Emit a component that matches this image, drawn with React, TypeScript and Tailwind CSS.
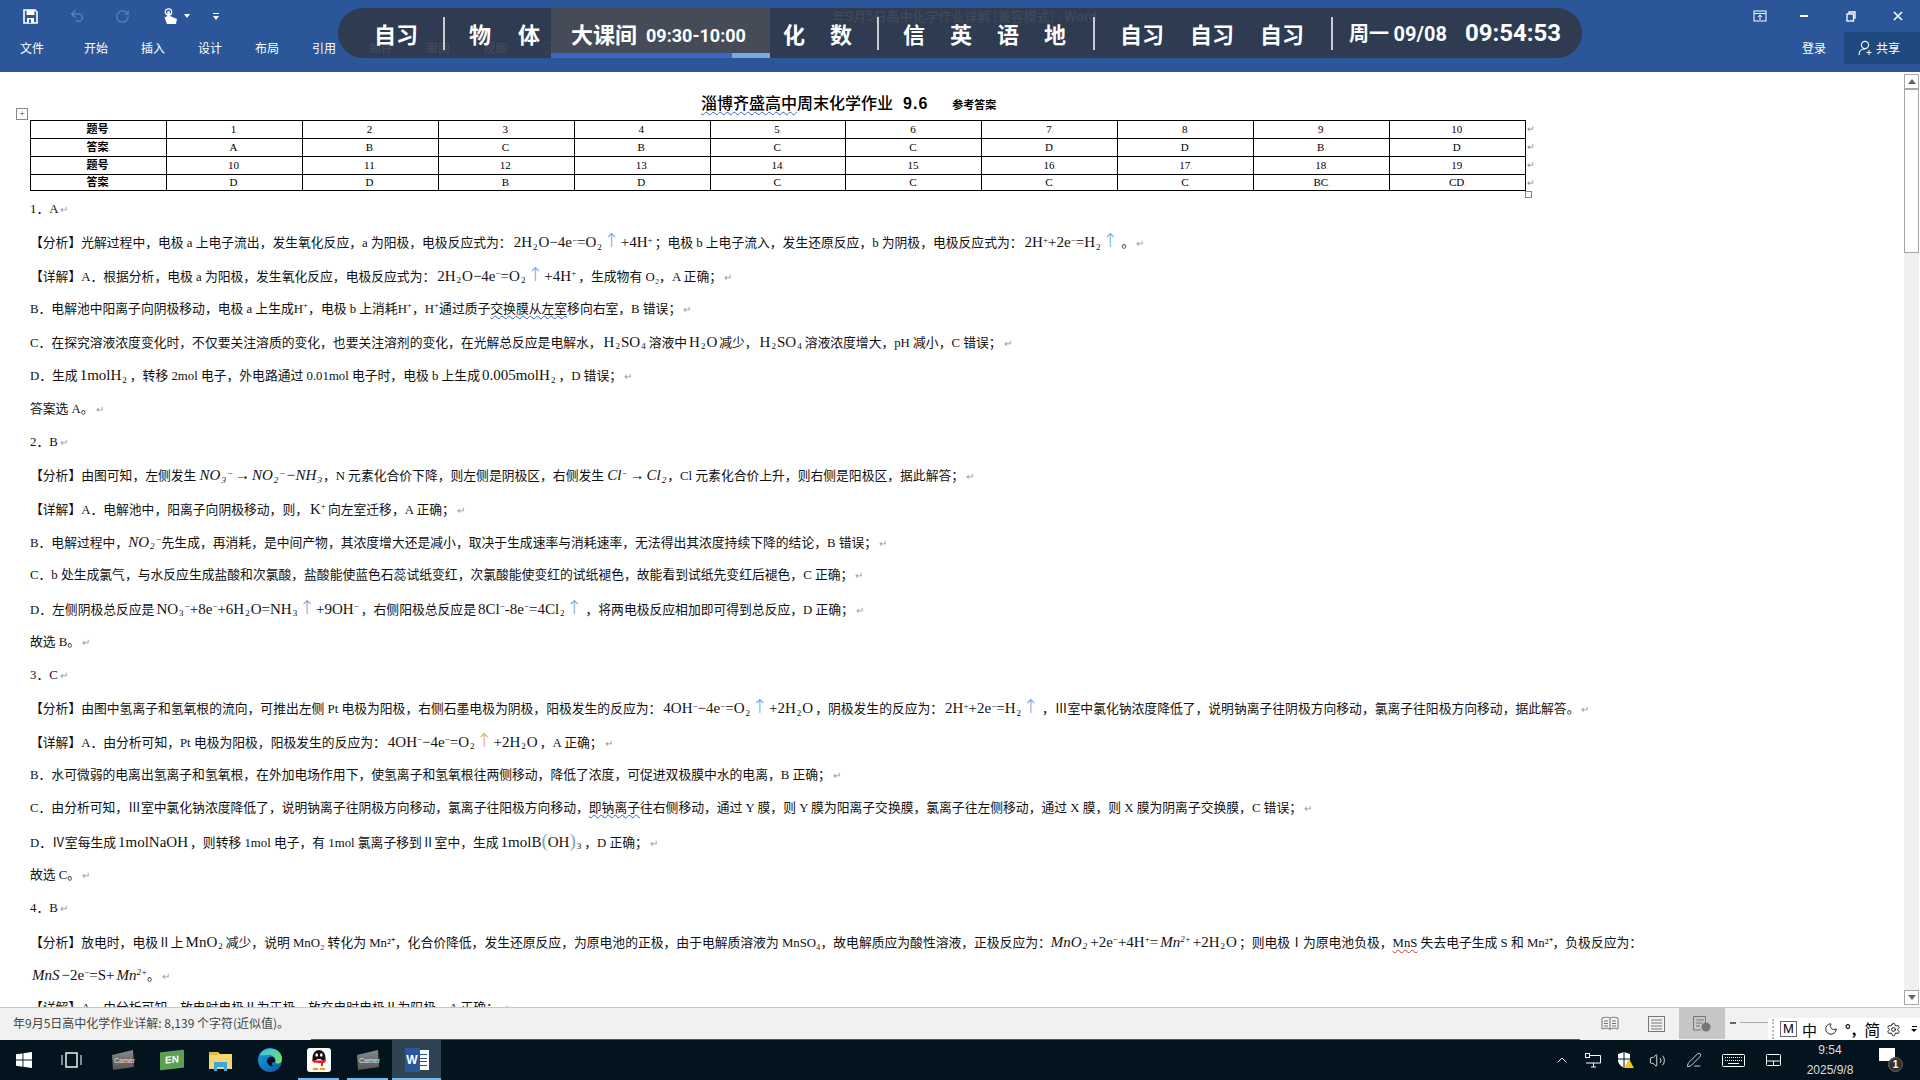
import type { ReactNode } from 'react'
import {
  Undo2, RotateCcw, Lightbulb, ChevronUp, Volume2, PenLine, Settings, Moon,
} from 'lucide-react'

const S = ({ children }: { children: ReactNode }) => <sub className="text-[9px] mx-[1px]">{children}</sub>
const U = ({ children }: { children: ReactNode }) => <sup className="text-[9px]">{children}</sup>
const Up = ({ c = 'text-[#7ba3d8]' }: { c?: string }) => (
  <span className={`${c} text-[19px] leading-none mx-[1px] font-['DejaVu_Sans',sans-serif] font-extralight`}>↑</span>
)
const Ret = () => <span className="text-[10px] text-[#999] ml-[2px]">↵</span>
const E = ({ children }: { children: ReactNode }) => <span className="text-[15px] mx-[2px]">{children}</span>
const I = ({ children }: { children: ReactNode }) => <i className="text-[15px]">{children}</i>
const Paren = ({ children }: { children: ReactNode }) => (
  <span className="text-[#7ba3d8] text-[19px] leading-none font-extralight">{children}</span>
)
const Blue = ({ children }: { children: ReactNode }) => (
  <span className="underline decoration-wavy decoration-[#3a5fd0] decoration-1 underline-offset-2">{children}</span>
)
const Red = ({ children }: { children: ReactNode }) => (
  <span className="underline decoration-wavy decoration-[#d03030] decoration-1 underline-offset-2">{children}</span>
)
const P = ({ children }: { children: ReactNode }) => (
  <p className="h-[33.3px] leading-[33.3px] pl-[30px] whitespace-nowrap">{children}</p>
)

const eqAnode = (c?: string) => (
  <E>4OH<U>−</U>−4e<U>−</U>=O<S>2</S><Up c={c} />+2H<S>2</S>O</E>
)
const eqWater = (c?: string) => (
  <E>2H<S>2</S>O−4e<U>−</U>=O<S>2</S><Up c={c} />+4H<U>+</U></E>
)
const eqH2 = (c?: string) => (
  <E>2H<U>+</U>+2e<U>−</U>=H<S>2</S><Up c={c} /></E>
)

const row1 = ['1', '2', '3', '4', '5', '6', '7', '8', '9', '10']
const row2 = ['A', 'B', 'C', 'B', 'C', 'C', 'D', 'D', 'B', 'D']
const row3 = ['10', '11', '12', '13', '14', '15', '16', '17', '18', '19']
const row4 = ['D', 'D', 'B', 'D', 'C', 'C', 'C', 'C', 'BC', 'CD']

function TableRow({ head, cells, last }: { head: string; cells: string[]; last?: boolean }) {
  return (
    <tr className={last ? 'h-[16px]' : 'h-[18px]'}>
      <td className="border border-black text-center text-[11px] font-bold leading-none p-0">
        {head}<span className="text-[7px] text-[#999] font-normal">.</span>
      </td>
      {cells.map((c, i) => (
        <td key={i} className="border border-black text-center text-[11px] leading-none p-0">
          {c}<span className="text-[7px] text-[#999]">.</span>
        </td>
      ))}
    </tr>
  )
}

function Ribbon() {
  return (
    <header className="relative h-[72px] bg-[#2b579a] text-white shrink-0">
      {/* quick access + title + window buttons */}
      <div className="h-[32px] flex items-center relative">
        <svg width="15" height="15" viewBox="0 0 15 15" className="ml-[23px]">
          <path d="M1 1h11l2 2v11H1z" fill="none" stroke="#fff" strokeWidth="1.6" />
          <rect x="3.5" y="1" width="8" height="5" fill="#fff" />
          <rect x="4" y="9" width="7" height="5" fill="#fff" />
          <rect x="6" y="10.5" width="2" height="3.5" fill="#2b579a" />
        </svg>
        <Undo2 className="w-[16px] h-[16px] ml-[31px] text-[#5b7fb5]" strokeWidth={2.2} />
        <RotateCcw className="w-[15px] h-[15px] ml-[30px] text-[#5b7fb5] -scale-x-100" strokeWidth={2.2} />
        <svg width="14" height="17" viewBox="0 0 14 17" className="ml-[33px]">
          <circle cx="5.5" cy="4" r="3.2" fill="none" stroke="#fff" strokeWidth="1.3" />
          <rect x="4.3" y="3" width="2.6" height="9" rx="1.3" fill="#fff" />
          <path d="M4.5 8l-3 1.5L4 16h9l1-5-7-3z" fill="#fff" />
        </svg>
        <span className="ml-[7px] w-0 h-0 border-x-[3px] border-x-transparent border-t-[4px] border-t-white" />
        <span className="ml-[23px] flex flex-col items-center gap-[2px]">
          <span className="w-[6px] h-[1px] bg-white" />
          <span className="w-0 h-0 border-x-[3px] border-x-transparent border-t-[4px] border-t-white" />
        </span>
        <span className="ml-[614px] text-[13px] text-white/90 font-['Noto_Sans_CJK_SC',sans-serif]">
          年9月5日高中化学作业详解 [兼容模式] - Word
        </span>
        <svg width="14" height="12" viewBox="0 0 14 12" className="ml-auto mr-[33px]" fill="none" stroke="#fff">
          <rect x="1" y="1" width="12" height="10" />
          <path d="M1 3.5h12M7 10V5M5 7l2-2 2 2" />
        </svg>
        <span className="w-[8px] h-[2px] bg-white mr-[38px]" />
        <svg width="10" height="11" viewBox="0 0 10 11" className="mr-[37px]" fill="none" stroke="#fff" strokeWidth="1.3">
          <rect x="1" y="3" width="6.5" height="7" />
          <path d="M3 3V1h6v6H7.5" />
        </svg>
        <svg width="10" height="10" viewBox="0 0 10 10" className="mr-[17px]" stroke="#fff" strokeWidth="1.6">
          <path d="M1 1l8 8M9 1l-8 8" />
        </svg>
      </div>
      {/* tabs */}
      <div className="h-[32px] flex items-center text-[12px] font-['Noto_Sans_CJK_SC',sans-serif]">
        <span className="ml-[20px]">文件</span>
        <span className="ml-[40px]">开始</span>
        <span className="ml-[33px]">插入</span>
        <span className="ml-[33px]">设计</span>
        <span className="ml-[33px]">布局</span>
        <span className="ml-[33px]">引用</span>
        <span className="ml-[33px]">邮件</span>
        <span className="ml-[33px]">审阅</span>
        <span className="ml-[33px]">视图</span>
        <Lightbulb className="w-[14px] h-[14px] ml-[33px]" strokeWidth={1.2} />
        <span className="ml-[2px]">告诉我您想要做什么...</span>
        <span className="ml-auto mr-[18px]">登录</span>
        <span className="h-[32px] w-[76px] bg-[#1f4a80] flex items-center pl-[14px] gap-[2px]">
          <svg width="16" height="16" viewBox="0 0 16 16" fill="none" stroke="#fff" strokeWidth="1.1">
            <circle cx="7" cy="5" r="3.6" />
            <path d="M1 15c0-4 2.5-6 6-6M11 10v5M8.5 12.5h5" />
          </svg>
          共享
        </span>
      </div>
      {/* class schedule overlay */}
      <div className="absolute left-[338px] top-[8px] w-[1244px] h-[50px] rounded-[25px] bg-[#2f3848]/90 overflow-hidden flex items-center font-['Noto_Sans_CJK_SC',sans-serif] font-bold text-[22px] text-white leading-none">
        <span className="w-[105px] pl-[36px]">自习</span>
        <span className="w-[2px] h-[33px] bg-[#c8ccd2]" />
        <span className="w-[106px] pl-[24px] flex gap-[27px]"><span>物</span><span>体</span></span>
        <div className="relative w-[219px] h-[50px] bg-[#454c58] flex items-center pl-[20px]">
          <span>大课间</span>
          <span className="text-[18px] ml-[9px] mt-[5px] font-['Roboto',sans-serif]">09:30-10:00</span>
          <div className="absolute left-0 bottom-0 w-full h-[5px] bg-[#3f66c0]">
            <div className="absolute right-0 top-0 w-[38px] h-full bg-[#74ace0]" />
          </div>
        </div>
        <span className="w-[107px] pl-[13px] flex gap-[25px]"><span>化</span><span>数</span></span>
        <span className="w-[2px] h-[33px] bg-[#c8ccd2]" />
        <span className="w-[214px] pl-[24px] flex gap-[25px]"><span>信</span><span>英</span><span>语</span><span>地</span></span>
        <span className="w-[2px] h-[33px] bg-[#c8ccd2]" />
        <span className="w-[236px] pl-[25px] flex gap-[26px]"><span>自习</span><span>自习</span><span>自习</span></span>
        <span className="w-[2px] h-[33px] bg-[#c8ccd2]" />
        <span className="pl-[16px] text-[20px] whitespace-nowrap">周一 <span className="font-['Roboto',sans-serif]">09/08</span></span>
        <span className="ml-[18px] text-[24px] font-['Roboto',sans-serif]">09:54:53</span>
      </div>
    </header>
  )
}

function Doc() {
  return (
    <div className="relative flex-1 min-w-0 bg-white overflow-hidden text-[12.8px] text-[#111] font-['Liberation_Serif','Noto_Sans_CJK_SC',serif]">
      {/* title */}
      <div className="h-[48px] pl-[701px] pt-[24px] flex items-baseline leading-none whitespace-nowrap text-black">
        <span className="text-[16px] font-medium"><Blue>淄博齐盛高中</Blue>周末化学作业</span>
        <span className="text-[16px] font-bold ml-[10px] tracking-[1px] font-['Liberation_Sans',sans-serif]">9.6</span>
        <span className="text-[11px] font-bold ml-[24px]">参考答案</span>
      </div>
      {/* table move handle */}
      <div className="absolute left-[16px] top-[36px] w-[12px] h-[12px] border border-[#888] text-[10px] leading-[9px] text-center text-[#444] bg-white">+</div>
      <table className="table-fixed border-collapse ml-[30px] w-[1496px] text-black">
        <tbody>
          <TableRow head="题号" cells={row1} />
          <TableRow head="答案" cells={row2} />
          <TableRow head="题号" cells={row3} />
          <TableRow head="答案" cells={row4} last />
        </tbody>
      </table>
      {/* row end marks + table resize handle */}
      <div className="absolute left-[1527px] top-[48px] flex flex-col text-[9px] leading-[18px] text-[#888]">
        <span>↵</span><span>↵</span><span>↵</span><span>↵</span>
      </div>
      <div className="absolute left-[1525px] top-[119px] w-[7px] h-[7px] border border-[#888] bg-white" />

      <div className="mt-[2px]">
        <P>1．A<Ret /></P>
        <P>【分析】光解过程中，电极 a 上电子流出，发生氧化反应，a 为阳极，电极反应式为：{eqWater()}；电极 b 上电子流入，发生还原反应，b 为阴极，电极反应式为：<E>2H<U>+</U>+2e<U>−</U>=H<S>2</S><Up /></E>。<Ret /></P>
        <P>【详解】A．根据分析，电极 a 为阳极，发生氧化反应，电极反应式为：{eqWater()}，生成物有 O₂，A 正确；<Ret /></P>
        <P>B．电解池中阳离子向阴极移动，电极 a 上生成H<U>+</U>，电极 b 上消耗H<U>+</U>，H<U>+</U>通过质子<Blue>交换膜从左室</Blue>移向右室，B 错误；<Ret /></P>
        <P>C．在探究溶液浓度变化时，不仅要关注溶质的变化，也要关注溶剂的变化，在光解总反应是电解水，<E>H<S>2</S>SO<S>4</S></E>溶液中<E>H<S>2</S>O</E>减少，<E>H<S>2</S>SO<S>4</S></E>溶液浓度增大，pH 减小，C 错误；<Ret /></P>
        <P>D．生成<E>1molH<S>2</S></E>，转移 2mol 电子，外电路通过 0.01mol 电子时，电极 b 上生成<E>0.005molH<S>2</S></E>，D 错误；<Ret /></P>
        <P>答案选 A。<Ret /></P>
        <P>2．B<Ret /></P>
        <P>【分析】由图可知，左侧发生 <I>NO<S>3</S><U>−</U></I><E>→</E><I>NO<S>2</S><U>−</U>−NH<S>3</S></I>，N 元素化合价下降，则左侧是阴极区，右侧发生 <I>Cl<U>−</U></I><E>→</E><I>Cl<S>2</S></I>，Cl 元素化合价上升，则右侧是阳极区，据此解答；<Ret /></P>
        <P>【详解】A．电解池中，阳离子向阴极移动，则，<E>K<U>+</U></E>向左室迁移，A 正确；<Ret /></P>
        <P>B．电解过程中，<I>NO<S>2</S><U>−</U></I>先生成，再消耗，是中间产物，其浓度增大还是减小，取决于生成速率与消耗速率，无法得出其浓度持续下降的结论，B 错误；<Ret /></P>
        <P>C．b 处生成氯气，与水反应生成盐酸和次氯酸，盐酸能使蓝色石蕊试纸变红，次氯酸能使变红的试纸褪色，故能看到试纸先变红后褪色，C 正确；<Ret /></P>
        <P>D．左侧阴极总反应是<E>NO<S>3</S><U>−</U>+8e<U>−</U>+6H<S>2</S>O=NH<S>3</S><Up />+9OH<U>−</U></E>，右侧阳极总反应是<E>8Cl<U>−</U>-8e<U>−</U>=4Cl<S>2</S><Up /></E>，将两电极反应相加即可得到总反应，D 正确；<Ret /></P>
        <P>故选 B。<Ret /></P>
        <P>3．C<Ret /></P>
        <P>【分析】由图中氢离子和氢氧根的流向，可推出左侧 Pt 电极为阳极，右侧石墨电极为阴极，阳极发生的反应为：{eqAnode()}，阴极发生的反应为：{eqH2()}，Ⅲ室中氯化钠浓度降低了，说明钠离子往阴极方向移动，氯离子往阳极方向移动，据此解答。<Ret /></P>
        <P>【详解】A．由分析可知，Pt 电极为阳极，阳极发生的反应为：{eqAnode('text-[#e0a860]')}，A 正确；<Ret /></P>
        <P>B．水可微弱的电离出氢离子和氢氧根，在外加电场作用下，使氢离子和氢氧根往两侧移动，降低了浓度，可促进双极膜中水的电离，B 正确；<Ret /></P>
        <P>C．由分析可知，Ⅲ室中氯化钠浓度降低了，说明钠离子往阴极方向移动，氯离子往阳极方向移动，<Blue>即钠离子</Blue>往右侧移动，通过 Y 膜，则 Y 膜为阳离子交换膜，氯离子往左侧移动，通过 X 膜，则 X 膜为阴离子交换膜，C 错误；<Ret /></P>
        <P>D．Ⅳ室每生成<E>1molNaOH</E>，则转移 1mol 电子，有 1mol 氯离子移到Ⅱ室中，生成<E>1molB<Paren>(</Paren>OH<Paren>)</Paren><S>3</S></E>，D 正确；<Ret /></P>
        <P>故选 C。<Ret /></P>
        <P>4．B<Ret /></P>
        <P>【分析】放电时，电极Ⅱ上<E>MnO<S>2</S></E>减少，说明 MnO₂ 转化为 Mn²⁺，化合价降低，发生还原反应，为原电池的正极，由于电解质溶液为 MnSO₄，故电解质应为酸性溶液，正极反应为：<I>MnO<S>2</S></I><E>+2e<U>−</U>+4H<U>+</U>=</E><I>Mn<U>2+</U></I><E>+2H<S>2</S>O</E>；则电极Ⅰ为原电池负极，<Red>MnS</Red> 失去电子生成 S 和 Mn²⁺，负极反应为：</P>
        <P><span className="ml-[2px]"><I>MnS</I><E>−2e<U>−</U>=S+</E><I>Mn<U>2+</U></I></span>。<Ret /></P>
        <P>【详解】A．由分析可知，放电时电极Ⅱ为正极，放充电时电极Ⅱ为阳极，A 正确；<Ret /></P>
      </div>
    </div>
  )
}

function Scrollbar() {
  return (
    <div className="w-[16px] shrink-0 bg-white pr-[1px] flex flex-col pt-[2px] pb-[2px]">
      <div className="flex flex-col flex-1 bg-[#f0f0f0]">
        <div className="h-[15px] border border-[#a6a6a6] bg-white flex items-center justify-center">
          <span className="w-0 h-0 border-x-[4px] border-x-transparent border-b-[5px] border-b-[#666]" />
        </div>
        <div className="h-[164px] border border-[#a6a6a6] bg-white" />
        <div className="flex-1" />
        <div className="h-[15px] border border-[#a6a6a6] bg-white flex items-center justify-center">
          <span className="w-0 h-0 border-x-[4px] border-x-transparent border-t-[5px] border-t-[#666]" />
        </div>
      </div>
    </div>
  )
}

function StatusBar() {
  return (
    <footer className="relative h-[33px] shrink-0 bg-[#f1f1f1] border-t border-[#c6c6c6] flex text-[12px] text-[#444] font-['Noto_Sans_CJK_SC',sans-serif]">
      <span className="pl-[13px] leading-[30px]">年9月5日高中化学作业详解: 8,139 个字符(近似值)。</span>
      <div className="ml-auto flex items-start mr-[195px]">
        <div className="w-[46px] h-[31px] flex items-center justify-center">
          <svg width="18" height="16" viewBox="0 0 18 16" fill="none" stroke="#777">
            <path d="M9 2C7 1 4 1 1 2v11c3-1 6-1 8 0 2-1 5-1 8 0V2c-3-1-6-1-8 0zM9 2v12M3 5h4M3 7.5h4M3 10h4M11 5h4M11 7.5h4M11 10h4" />
          </svg>
        </div>
        <div className="w-[46px] h-[31px] flex items-center justify-center">
          <svg width="17" height="16" viewBox="0 0 17 16" fill="none" stroke="#777">
            <rect x="0.5" y="0.5" width="16" height="15" />
            <path d="M3 4h11M3 7h11M3 10h11M3 13h11" />
          </svg>
        </div>
        <div className="w-[46px] h-[31px] bg-[#c6c6c6] flex items-center justify-center">
          <svg width="18" height="16" viewBox="0 0 18 16" fill="none" stroke="#777">
            <path d="M8 14H0.5V0.5h12V7M3 4h8M3 7h6M3 10h4" />
            <circle cx="13" cy="11" r="4.5" fill="#777" stroke="none" />
          </svg>
        </div>
      </div>
      <span className="absolute left-[1730px] top-[14px] w-[6px] h-[2px] bg-[#666]" />
      <span className="absolute left-[1740px] top-[14px] w-[28px] h-[1px] bg-[#aaa]" />
      {/* IME toolbar */}
      <div className="absolute left-[1768px] top-[10px] w-[152px] h-[22px] bg-white flex items-center text-black text-[15px] leading-none">
        <span className="w-[2px] h-[20px] ml-[4px] border-l-2 border-dotted border-[#bbb]" />
        <span className="ml-[6px] w-[17px] h-[16px] border border-[#666] text-[13px] text-center leading-[14px] font-['Liberation_Sans',sans-serif]">M</span>
        <span className="ml-[5px]">中</span>
        <Moon className="w-[14px] h-[14px] ml-[7px]" strokeWidth={1.4} />
        <span className="ml-[7px] text-[14px] font-bold tracking-[1px]">°,</span>
        <span className="ml-[7px] text-[16px]">简</span>
        <Settings className="w-[15px] h-[15px] ml-[6px]" strokeWidth={1.4} />
        <span className="ml-[10px] flex flex-col items-center gap-[2px]">
          <span className="w-[5px] h-[1px] bg-black" />
          <span className="w-0 h-0 border-x-[3px] border-x-transparent border-t-[3px] border-t-black" />
        </span>
      </div>
      <span className="absolute left-[311px] bottom-0 w-[1269px] h-[1px] bg-[#2b579a]" />
    </footer>
  )
}

function CameraIcon() {
  return (
    <svg width="24" height="22" viewBox="0 0 24 22">
      <defs>
        <linearGradient id="cam" x1="0" y1="0" x2="0" y2="1">
          <stop offset="0" stopColor="#8a8a8a" />
          <stop offset="1" stopColor="#555" />
        </linearGradient>
      </defs>
      <path d="M1 6l21-5 1 17-21 3z" fill="url(#cam)" />
      <text x="3" y="14" fontSize="7" fill="#e4e4e4" fontFamily="Liberation Sans">Camera</text>
    </svg>
  )
}

function TaskSlot({ active, underline, children }: { active?: boolean; underline?: boolean; children: ReactNode }) {
  return (
    <div className={`relative w-[49px] h-[40px] flex items-center justify-center ${active ? 'bg-[#2f4353]' : ''}`}>
      {children}
      {underline && (
        <span className={`absolute bottom-0 h-[2px] bg-[#76b9ed] ${active ? 'left-0 right-0' : 'left-[4px] right-[4px]'}`} />
      )}
    </div>
  )
}

function Taskbar() {
  return (
    <nav className="h-[40px] shrink-0 bg-[#03141f] flex items-center text-white font-['Noto_Sans_CJK_SC',sans-serif]">
      <svg width="16" height="16" viewBox="0 0 16 16" fill="#fff" className="ml-[16px]">
        <path d="M0 2.3l6.5-.9v6.2H0zM7.4 1.3L16 0v7.6H7.4zM0 8.5h6.5v6.2L0 13.7zM7.4 8.5H16V16l-8.6-1.2z" />
      </svg>
      <svg width="21" height="16" viewBox="0 0 21 16" fill="none" stroke="#fff" className="ml-[29px] mr-[16px]">
        <rect x="5" y="1" width="11" height="14" strokeWidth="1.4" />
        <path d="M1 3v10M20 3v10" />
      </svg>
      <TaskSlot><CameraIcon /></TaskSlot>
      <TaskSlot>
        <span className="w-[24px] h-[18px] bg-[#5ba052] rounded-[1px] -skew-y-6 text-[10px] font-bold text-center leading-[18px] font-['Liberation_Sans',sans-serif]">EN</span>
      </TaskSlot>
      <TaskSlot>
        <svg width="23" height="21" viewBox="0 0 23 21">
          <path d="M0 2h9l2 2h12v15H0z" fill="#f6d56e" />
          <rect x="0" y="2" width="9" height="3" fill="#e8b93f" />
          <path d="M5 12h13v9h-3v-4H8v4H5z" fill="#3fa5e0" />
        </svg>
      </TaskSlot>
      <TaskSlot>
        <svg width="24" height="24" viewBox="0 0 24 24">
          <defs>
            <linearGradient id="edgeB" x1="0" y1="0" x2="1" y2="1">
              <stop offset="0" stopColor="#1b9de2" />
              <stop offset="1" stopColor="#0c59a4" />
            </linearGradient>
            <linearGradient id="edgeG" x1="0" y1="0" x2="1" y2="1">
              <stop offset="0" stopColor="#35c1f1" />
              <stop offset="1" stopColor="#7ee05a" />
            </linearGradient>
          </defs>
          <circle cx="12" cy="12" r="12" fill="url(#edgeB)" />
          <path d="M2 7C5 0 15-1 20 3c4 3 5 8 3 11-1 2-5 2-6 0 1-4-2-7-6-7-4 0-7 1-9 0z" fill="url(#edgeG)" />
          <path d="M9 13c0-3 3-5 6-4 2 1 3 3 2 5-3 0-4 2-2 4-3 1-6-2-6-5z" fill="#03141f" />
        </svg>
      </TaskSlot>
      <TaskSlot underline>
        <svg width="24" height="24" viewBox="0 0 24 24">
          <rect width="24" height="24" rx="3" fill="#fff" />
          <ellipse cx="12" cy="10" rx="6.5" ry="8" fill="#111" />
          <ellipse cx="12" cy="16" rx="5" ry="5" fill="#fff" />
          <ellipse cx="9.7" cy="7" rx="1.3" ry="1.8" fill="#fff" />
          <ellipse cx="14.3" cy="7" rx="1.3" ry="1.8" fill="#fff" />
          <path d="M5 11c4 2 10 2 14 0v2c-1 1-2 2-3 2v3h-2v-3c-3 0-6 0-9-2z" fill="#e01e1e" />
          <ellipse cx="8.5" cy="21" rx="3" ry="1.3" fill="#f0a020" />
          <ellipse cx="15.5" cy="21" rx="3" ry="1.3" fill="#f0a020" />
        </svg>
      </TaskSlot>
      <TaskSlot underline><CameraIcon /></TaskSlot>
      <TaskSlot active underline>
        <span className="relative w-[24px] h-[24px]">
          <span className="absolute right-0 top-[2px] w-[13px] h-[20px] bg-white flex flex-col justify-around py-[3px] pl-[3px] pr-[2px]">
            <span className="h-[1px] bg-[#2b579a]" /><span className="h-[1px] bg-[#2b579a]" /><span className="h-[1px] bg-[#2b579a]" /><span className="h-[1px] bg-[#2b579a]" />
          </span>
          <span className="absolute left-0 top-0 w-[15px] h-[24px] bg-[#2b579a] text-white text-[12px] font-bold flex items-center justify-center font-['Liberation_Sans',sans-serif]">W</span>
        </span>
      </TaskSlot>

      {/* tray */}
      <ChevronUp className="w-[16px] h-[16px] ml-auto" strokeWidth={1.4} />
      <svg width="16" height="15" viewBox="0 0 16 15" fill="none" stroke="#fff" className="ml-[15px]">
        <path d="M4 2.5h11.5V10H1M6 14h5M8.5 10v4" />
        <rect x="0.5" y="0.5" width="4" height="4" fill="#03141f" />
      </svg>
      <svg width="16" height="16" viewBox="0 0 16 16" className="ml-[17px]">
        <path d="M0 2l6-2 6 2v6c0 4-3 6-6 8-3-2-6-4-6-8z" fill="#fff" />
        <path d="M6 0v16M0 7h12" stroke="#03141f" />
        <path d="M11 7l5 9H6z" fill="#f5c518" />
      </svg>
      <Volume2 className="w-[17px] h-[17px] ml-[15px]" strokeWidth={1.2} />
      <PenLine className="w-[16px] h-[16px] ml-[20px]" strokeWidth={1.2} />
      <svg width="23" height="13" viewBox="0 0 23 13" fill="none" stroke="#fff" className="ml-[20px]">
        <rect x="0.5" y="0.5" width="22" height="12" rx="1" />
        <path d="M3 3.5h17M3 6.5h17" strokeDasharray="1 1" />
        <path d="M6 9.5h11" />
      </svg>
      <svg width="15" height="12" viewBox="0 0 15 12" fill="none" stroke="#fff" className="ml-[21px]">
        <rect x="0.5" y="0.5" width="14" height="11" rx="1" />
        <path d="M0.5 7h14M7.5 7v4.5" />
      </svg>
      <div className="w-[98px] text-center text-[12px] leading-[20px] text-[#ddd] font-['Liberation_Sans','Noto_Sans_CJK_SC',sans-serif]">
        <div>9:54</div>
        <div>2025/9/8</div>
      </div>
      <div className="relative w-[24px] h-[24px] mr-[17px]">
        <span className="absolute left-0 top-0 w-[16px] h-[13px] bg-white" />
        <span className="absolute right-0 bottom-0 w-[15px] h-[15px] rounded-full bg-[#333] border border-[#666] text-[10px] leading-[13px] text-center font-bold font-['Liberation_Sans',sans-serif]">1</span>
      </div>
    </nav>
  )
}

export default function App() {
  return (
    <div className="w-[1920px] h-[1080px] flex flex-col overflow-hidden">
      <Ribbon />
      <main className="flex-1 min-h-0 flex">
        <Doc />
        <Scrollbar />
      </main>
      <StatusBar />
      <Taskbar />
    </div>
  )
}
